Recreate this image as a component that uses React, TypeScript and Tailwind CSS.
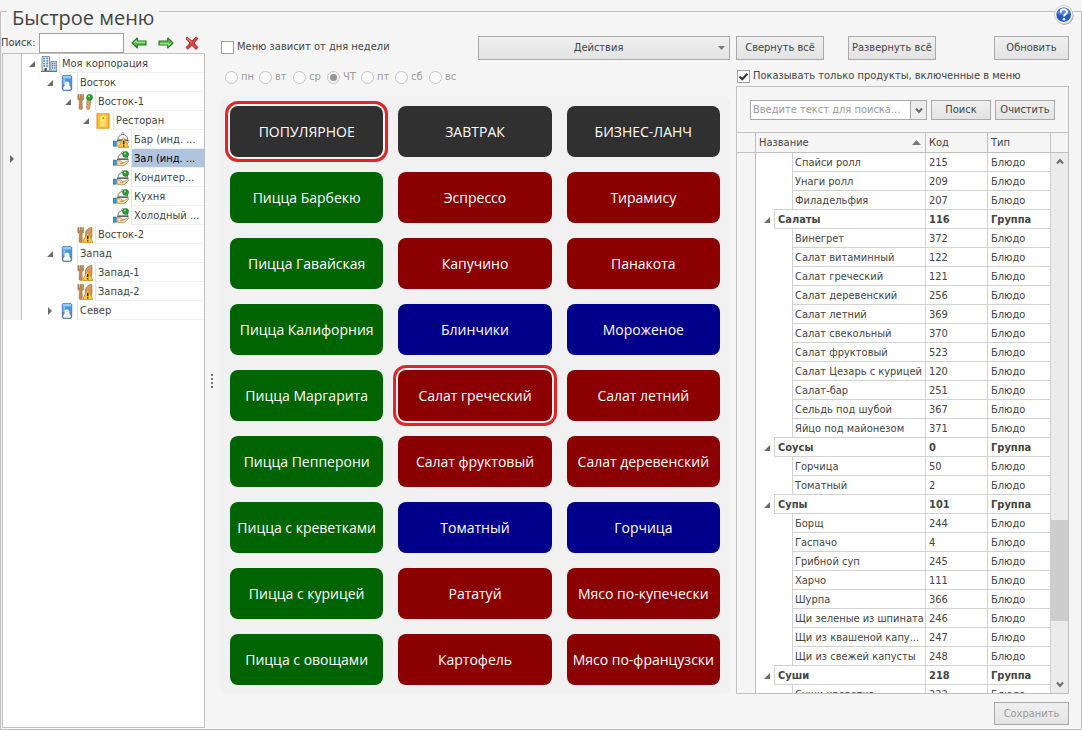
import { useState } from "react";
import type { ReactNode } from "react";

type TreeIconName = "corp" | "region" | "cutleryOk" | "cutleryWarn" | "restaurant" | "trayOk" | "trayWarn";

type TreeNode = {
  name: string;
  level: number;
  icon: TreeIconName;
  state?: "open" | "closed";
};

type Product = {
  name: string;
  code: number;
  group?: boolean;
};

type TileColor = "dark" | "green" | "red" | "blue";

const tree: TreeNode[] = [
  { name: "Моя корпорация", level: 0, icon: "corp", state: "open" },
  { name: "Восток", level: 1, icon: "region", state: "open" },
  { name: "Восток-1", level: 2, icon: "cutleryOk", state: "open" },
  { name: "Ресторан", level: 3, icon: "restaurant", state: "open" },
  { name: "Бар (инд. ...", level: 4, icon: "trayWarn" },
  { name: "Зал (инд. ...", level: 4, icon: "trayOk" },
  { name: "Кондитер...", level: 4, icon: "trayOk" },
  { name: "Кухня", level: 4, icon: "trayOk" },
  { name: "Холодный ...", level: 4, icon: "trayOk" },
  { name: "Восток-2", level: 2, icon: "cutleryWarn" },
  { name: "Запад", level: 1, icon: "region", state: "open" },
  { name: "Запад-1", level: 2, icon: "cutleryWarn" },
  { name: "Запад-2", level: 2, icon: "cutleryWarn" },
  { name: "Север", level: 1, icon: "region", state: "closed" }
];

const indents = ["pl-0", "pl-[18px]", "pl-9", "pl-[54px]", "pl-[72px]"];

const days = ["пн", "вт", "ср", "ЧТ", "пт", "сб", "вс"];

const tiles: [string, TileColor][] = [
  ["ПОПУЛЯРНОЕ", "dark"],
  ["ЗАВТРАК", "dark"],
  ["БИЗНЕС-ЛАНЧ", "dark"],
  ["Пицца Барбекю", "green"],
  ["Эспрессо", "red"],
  ["Тирамису", "red"],
  ["Пицца Гавайская", "green"],
  ["Капучино", "red"],
  ["Панакота", "red"],
  ["Пицца Калифорния", "green"],
  ["Блинчики", "blue"],
  ["Мороженое", "blue"],
  ["Пицца Маргарита", "green"],
  ["Салат греческий", "red"],
  ["Салат летний", "red"],
  ["Пицца Пепперони", "green"],
  ["Салат фруктовый", "red"],
  ["Салат деревенский", "red"],
  ["Пицца с креветками", "green"],
  ["Томатный", "blue"],
  ["Горчица", "blue"],
  ["Пицца с курицей", "green"],
  ["Рататуй", "red"],
  ["Мясо по-купечески", "red"],
  ["Пицца с овощами", "green"],
  ["Картофель", "red"],
  ["Мясо по-французски", "red"]
];

const tileColors: Record<TileColor, string> = {
  dark: "bg-[#303030]",
  green: "bg-[#006400]",
  red: "bg-[#8b0000]",
  blue: "bg-[#00008b]"
};

const products: Product[] = [
  { name: "Спайси ролл", code: 215 },
  { name: "Унаги ролл", code: 209 },
  { name: "Филадельфия", code: 207 },
  { name: "Салаты", code: 116, group: true },
  { name: "Винегрет", code: 372 },
  { name: "Салат витаминный", code: 122 },
  { name: "Салат греческий", code: 121 },
  { name: "Салат деревенский", code: 256 },
  { name: "Салат летний", code: 369 },
  { name: "Салат свекольный", code: 370 },
  { name: "Салат фруктовый", code: 523 },
  { name: "Салат Цезарь с курицей", code: 120 },
  { name: "Салат-бар", code: 251 },
  { name: "Сельдь под шубой", code: 367 },
  { name: "Яйцо под майонезом", code: 371 },
  { name: "Соусы", code: 0, group: true },
  { name: "Горчица", code: 50 },
  { name: "Томатный", code: 2 },
  { name: "Супы", code: 101, group: true },
  { name: "Борщ", code: 244 },
  { name: "Гаспачо", code: 4 },
  { name: "Грибной суп", code: 245 },
  { name: "Харчо", code: 111 },
  { name: "Шурпа", code: 366 },
  { name: "Щи зеленые из шпината", code: 246 },
  { name: "Щи из квашеной капу...", code: 247 },
  { name: "Щи из свежей капусты", code: 248 },
  { name: "Суши", code: 218, group: true },
  { name: "Суши креветка", code: 222 }
];

function Warning() {
  return (
    <g>
      <path d="M10.5 5.5 16 15.5H5.5Z" fill="#ffc83d" stroke="#d98a1c" strokeWidth=".8" strokeLinejoin="round" />
      <path d="M10.7 8.7v3.6M10.7 13.2v1.3" stroke="#222" strokeWidth="1.5" />
    </g>
  );
}

function OkDot() {
  return (
    <g>
      <circle cx="12.6" cy="3.4" r="3" fill="#2c9a35" stroke="#1d7527" strokeWidth=".6" />
      <circle cx="12" cy="2.5" r="1.1" fill="#8fe08a" />
    </g>
  );
}

function Fork() {
  return (
    <path
      d="M.8.5v4.3c0 1 .8 1.6 1.6 1.9L2 14.2c0 1.8 3.5 1.8 3.4 0L5 6.7c1-.3 1.6-.9 1.6-1.9V.5H5.5v3.6H4.6V.5H3v3.6H2V.5Z"
      fill="#c08a54"
      stroke="#9a6636"
      strokeWidth=".5"
    />
  );
}

function Tray() {
  return (
    <g>
      <circle cx="9.8" cy="1.6" r="1" fill="#eee" stroke="#666" strokeWidth=".7" />
      <path d="M4.8 7.8C5 4.4 7 2.5 9.8 2.5s4.8 1.9 5 5.3Z" fill="#eef0f2" stroke="#6d7277" strokeWidth=".9" />
      <path d="M4 8.4h11.6" stroke="#555" strokeWidth="1" />
      <path d="M0 9h3.6v5.3H0Z" fill="#2d9bd3" stroke="#1776a8" strokeWidth=".5" />
      <path
        d="M3.8 9.7h3.4l2.2 1.5h2.2l3-1.5c1-.4 1.5.4.8 1.1l-3.6 3.3c-1.8 1-4.7.9-8-.2Z"
        fill="#f5d9a0"
        stroke="#a07b45"
        strokeWidth=".7"
      />
      <path d="M7 12.4h3.5" stroke="#a07b45" strokeWidth=".7" />
    </g>
  );
}

const treeIcons: Record<TreeIconName, ReactNode> = {
  corp: (
    <g>
      <path d="M1 .5h7.5V15H1Z" fill="#e6eaed" stroke="#77797c" strokeWidth=".8" />
      <path d="M2.3 2.5h1.8M5.3 2.5h1.8M2.3 5h1.8M5.3 5h1.8M2.3 7.5h1.8M5.3 7.5h1.8M2.3 10h1.8M5.3 10h1.8" stroke="#2f8fc4" strokeWidth="1.5" />
      <path d="M3.5 12h2.4v3H3.5Z" fill="#555" />
      <path d="M9.8 5.5h5.7V15H9.8Z" fill="#d8dcdf" stroke="#77797c" strokeWidth=".8" />
      <path d="M11 7.5h1.3M13.2 7.5h1.3M11 9.7h1.3M13.2 9.7h1.3M11 12h1.3M13.2 12h1.3" stroke="#2f8fc4" strokeWidth="1.3" />
      <path d="M0 15.5h16" stroke="#6f7478" />
    </g>
  ),
  region: (
    <g>
      <path d="M3.2 1.5 4 .5h8l.8 1V14l-1 1.500H4.200l-1-1.500Z" fill="#4a93da" stroke="#235f9d" strokeWidth=".5" />
      <path d="M4 1h8v2.500H4Z" fill="#8fcdf8" />
      <path d="M4.300 3.500h2V9h-2Z" fill="#86c2f2" />
      <path d="M3.500 10.500h9V14l-1 1.200H4.500l-1-1.200Z" fill="#5b6c7c" />
      <path d="M4.200 14c0-2.400.6-3 1.600-3.400-.8-2.600.2-4.100 2.200-4.100s3 1.500 2.200 4.100c1 .4 1.600 1 1.600 3.400l-.6.800H4.800Z" fill="#f6f8fa" />
    </g>
  ),
  cutleryOk: (
    <g>
      <Fork />
      <path d="M10 4.500c2-1.600 4-.3 3.500 2.700l-.7 7c-.3 1.800-3 1.600-3.100 0Z" fill="#dba66b" stroke="#9a6636" strokeWidth=".6" />
      <OkDot />
    </g>
  ),
  cutleryWarn: (
    <g>
      <Fork />
      <path d="M8.500 5C10 1.800 13 .2 15 .7v8.600l-2 5H8.600Z" fill="#d09a62" stroke="#9a6636" strokeWidth=".6" />
      <Warning />
    </g>
  ),
  restaurant: (
    <g>
      <path d="M1.800.6h12.400v14.800H1.800Z" fill="#f6a51e" stroke="#e28c13" strokeWidth=".6" />
      <path d="M3 1.500h10v13H3Z" fill="#fbbd45" />
      <path d="M5.300 2.800h2V1.400h1.700v1.400h2v10.500H5.300Z" fill="#ffe96c" />
      <circle cx="8.200" cy="5.200" r="1.100" fill="#e28c13" />
      <path d="M6.500 9.200h3.500v1.600H6.500Z" fill="#fff" stroke="#e9a62a" strokeWidth=".5" />
    </g>
  ),
  trayOk: (
    <g>
      <Tray />
      <OkDot />
    </g>
  ),
  trayWarn: (
    <g>
      <Tray />
      <Warning />
    </g>
  )
};

function OpenMark() {
  return (
    <svg width="6" height="6" viewBox="0 0 6 6" aria-hidden="true">
      <path d="M6 0v6H0Z" fill="#6b6b6b" />
    </svg>
  );
}

function ClosedMark() {
  return (
    <svg width="4" height="8" viewBox="0 0 4 8" aria-hidden="true">
      <path d="M0 0v8l4-4Z" fill="#6b6b6b" />
    </svg>
  );
}

function Chevron({ up }: { up?: boolean }) {
  return (
    <svg width="8" height="7" viewBox="0 0 8 7" aria-hidden="true">
      <path d={up ? "M1 5.5 4 2l3 3.5" : "M1 1.5 4 5l3-3.5"} fill="none" stroke="#6b6b6b" strokeWidth="2" />
    </svg>
  );
}

function GreenArrow({ flip }: { flip?: boolean }) {
  return (
    <svg width="16" height="12" viewBox="0 0 16 12" className={flip ? "rotate-180" : ""} aria-hidden="true">
      <path d="M1 6 6.3 1v3H15v4H6.3v3Z" fill="#5fbf4d" stroke="#26772a" strokeWidth="1.1" strokeLinejoin="round" />
      <path d="M3 5.8 5.3 3.6V5.2H14" fill="none" stroke="#c1efae" strokeWidth=".9" />
    </svg>
  );
}

type ButtonProps = {
  children: ReactNode;
  className: string;
  disabled?: boolean;
};

function Button({ children, className, disabled }: ButtonProps) {
  return (
    <button
      type="button"
      disabled={disabled}
      className={`shrink-0 border border-[#a9a9a9] bg-linear-to-b from-[#f0f0f0] to-[#e3e3e3] text-center whitespace-nowrap disabled:text-[#9a9a9a] ${className}`}
    >
      {children}
    </button>
  );
}

type CheckboxProps = {
  label: string;
  checked: boolean;
  onChange: (checked: boolean) => void;
};

function Checkbox({ label, checked, onChange }: CheckboxProps) {
  return (
    <label className="flex items-center gap-[3px] whitespace-nowrap">
      <span className="relative flex">
        <input
          type="checkbox"
          className="size-[13px] appearance-none border border-[#a0a0a0] bg-white"
          checked={checked}
          onChange={(event) => onChange(event.target.checked)}
        />
        {checked && (
          <svg className="pointer-events-none absolute inset-0" width="13" height="13" viewBox="0 0 13 13" aria-hidden="true">
            <path d="M2.5 6.5 5.3 9.3 10.5 3.8" fill="none" stroke="#333" strokeWidth="2" />
          </svg>
        )}
      </span>
      {label}
    </label>
  );
}

function Sidebar() {
  const [selected, setSelected] = useState("Зал (инд. ...");

  return (
    <aside className="flex w-[204px] shrink-0 flex-col pb-px">
      <div className="flex h-5 items-center">
        <label htmlFor="tree-search" className="w-[38px] shrink-0">
          Поиск:
        </label>
        <input id="tree-search" className="h-5 w-[85px] border border-[#a0a0a0] bg-white px-1" />
        <div className="flex grow items-center justify-between pr-1.5 pl-[7px]">
          <button type="button" aria-label="Назад">
            <GreenArrow />
          </button>
          <button type="button" aria-label="Вперёд">
            <GreenArrow flip />
          </button>
          <button type="button" aria-label="Сбросить">
            <svg width="14" height="14" viewBox="0 0 14 14" aria-hidden="true">
              <path d="m2 1 5 4 4-4 2 1.500L9 7l4 4.500-2 2-4.200-4.200L3 13.300 1 11.500 5 7 1 3Z" fill="#d94444" stroke="#a91d1d" strokeWidth=".8" />
              <path d="m2.300 2.300 4.500 4" stroke="#f39a92" strokeWidth=".9" />
            </svg>
          </button>
        </div>
      </div>
      <div className="ml-px grow border border-[#c0c0c0] bg-white">
        <ul>
          {tree.map((node) => (
            <li key={node.name} className="flex h-[19px]">
              <span className="flex w-[19px] shrink-0 items-center justify-center border-r border-[#c0c0c0] bg-[#f5f5f5]">
                {selected === node.name && <ClosedMark />}
              </span>
              <button
                type="button"
                onClick={() => setSelected(node.name)}
                className={`flex min-w-0 grow items-stretch text-left ${indents[node.level]}`}
              >
                <span className="flex w-[19px] shrink-0 items-center justify-center pt-px pl-px">
                  {node.state === "open" && <OpenMark />}
                  {node.state === "closed" && <ClosedMark />}
                </span>
                <svg className="shrink-0 self-center" width="16" height="16" viewBox="0 0 16 16" aria-hidden="true">
                  {treeIcons[node.icon]}
                </svg>
                <span
                  className={`ml-0.5 grow overflow-hidden border-b border-l border-b-[#efefef] border-l-[#e3e3e3] pt-px pl-0.5 leading-[18px] whitespace-nowrap ${
                    selected === node.name ? "bg-[#b0c4de] text-black" : ""
                  }`}
                >
                  {node.name}
                </span>
              </button>
            </li>
          ))}
        </ul>
      </div>
    </aside>
  );
}

function MenuGrid() {
  const [byDay, setByDay] = useState(false);
  const [selected, setSelected] = useState(["ПОПУЛЯРНОЕ", "Салат греческий"]);

  const select = (name: string, index: number) => {
    setSelected(index < 3 ? [name, selected[1]] : [selected[0], name]);
  };

  return (
    <section className="flex min-w-0 grow flex-col">
      <div className="mt-[3px] flex items-start justify-between">
        <div className="pt-[3px] pl-px">
          <Checkbox label="Меню зависит от дня недели" checked={byDay} onChange={setByDay} />
        </div>
        <button
          type="button"
          aria-haspopup="menu"
          className="flex h-6 w-[252px] items-center border border-[#a9a9a9] bg-linear-to-b from-[#f0f0f0] to-[#e3e3e3] pr-1"
        >
          <span className="grow">Действия</span>
          <svg width="7" height="4" viewBox="0 0 7 4" aria-hidden="true">
            <path d="M0 0h7L3.500 4Z" fill="#7a7a7a" />
          </svg>
        </button>
      </div>
      <div className="mt-[9px] flex h-4 items-center pl-[5px] text-[#9a9a9a]">
        {days.map((day) => (
          <label key={day} className="flex w-[34px] items-center gap-[3px]">
            <input
              type="radio"
              name="day"
              disabled
              defaultChecked={day === "ЧТ"}
              className="size-[13px] shrink-0 appearance-none rounded-full border border-[#c4c4c4] bg-[#fafafa] p-[2px] checked:bg-[#959595] checked:bg-clip-content"
            />
            {day}
          </label>
        ))}
      </div>
      <div className="mt-[11px] grid grid-cols-3 gap-[15px] rounded-md bg-[#f1f1f1] px-2.5 pt-2.5 pb-[9px]">
        {tiles.map(([name, color], index) => (
          <button
            key={name}
            type="button"
            onClick={() => select(name, index)}
            className={`h-[51px] rounded-lg font-['Open_Sans',sans-serif] text-sm text-white ${tileColors[color]} ${
              selected.includes(name) ? "outline-3 outline-offset-2 outline-[#df2627]" : ""
            }`}
          >
            {name}
          </button>
        ))}
      </div>
    </section>
  );
}

function ProductTable() {
  return (
    <div className="flex h-0 grow overflow-hidden border-t border-[#c0c0c0]">
      <div className="min-w-0 grow bg-white">
        <table className="w-full table-fixed border-separate border-spacing-0 text-left">
          <thead>
            <tr className="h-5 bg-[#f5f5f5]">
              <th className="w-[19px] border-r border-b border-[#c0c0c0] p-0" aria-label="Маркер" />
              <th className="border-r border-b border-[#c0c0c0] p-0 font-normal">
                <div className="flex items-center justify-between pr-1 pl-[3px]">
                  Название
                  <svg width="9" height="5" viewBox="0 0 9 5" aria-hidden="true">
                    <path d="M4.500 0 9 5H0Z" fill="#7a7a7a" />
                  </svg>
                </div>
              </th>
              <th className="w-[62px] border-r border-b border-[#c0c0c0] p-0 pl-[3px] font-normal">Код</th>
              <th className="w-[63px] border-r border-b border-[#c0c0c0] p-0 pl-[3px] font-normal">Тип</th>
            </tr>
          </thead>
          <tbody>
            {products.map((product) => (
              <tr key={product.name} className={`h-[19px] ${product.group ? "font-bold" : ""}`}>
                <td className="border-r border-[#c0c0c0] bg-[#f5f5f5] p-0" />
                <td className="border-r border-[#d2d2d2] p-0">
                  <div className="flex h-[19px]">
                    <span className={`flex shrink-0 items-center justify-center pt-px pl-[3px] ${product.group ? "w-[18px]" : "w-9"}`}>
                      {product.group && <OpenMark />}
                    </span>
                    <span
                      className={`grow overflow-hidden border-b border-l border-[#d2d2d2] pt-px leading-[18px] whitespace-nowrap ${
                        product.group ? "-mt-px border-t pl-[3px]" : "pl-0.5"
                      }`}
                    >
                      {product.name}
                    </span>
                  </div>
                </td>
                <td className="border-r border-b border-[#d2d2d2] p-0 pt-px pl-[3px]">{product.code}</td>
                <td className="border-r border-b border-[#d2d2d2] p-0 pt-px pl-[3px]">{product.group ? "Группа" : "Блюдо"}</td>
              </tr>
            ))}
          </tbody>
        </table>
      </div>
      <div className="flex w-[17px] shrink-0 flex-col bg-[#ebebeb]">
        <div className="h-5 border-b border-[#c0c0c0] bg-[#f5f5f5]" />
        <div className="flex h-4 items-center justify-center">
          <Chevron up />
        </div>
        <div className="grow-[351]" />
        <div className="grow-[101] bg-[#cdcdcd]" />
        <div className="grow-[55]" />
        <div className="flex h-[17px] items-center justify-center">
          <Chevron />
        </div>
      </div>
    </div>
  );
}

function Products() {
  const [onlyIncluded, setOnlyIncluded] = useState(true);

  return (
    <section className="flex w-[333px] shrink-0 flex-col">
      <div className="mt-[3px] flex gap-6">
        <Button className="h-6 w-[88px]">Свернуть всё</Button>
        <Button className="h-6 w-[88px]">Развернуть всё</Button>
        <Button className="ml-auto h-6 w-[75px]">Обновить</Button>
      </div>
      <div className="mt-2 mb-0.5 flex h-4 items-center pl-px">
        <Checkbox label="Показывать только продукты, включенные в меню" checked={onlyIncluded} onChange={setOnlyIncluded} />
      </div>
      <div className="flex grow flex-col border border-[#c0c0c0]">
        <div className="flex gap-1 px-[13px] pt-[13px] pb-3">
          <div className="flex h-5 min-w-0 grow border border-[#a9a9a9] bg-white">
            <input
              aria-label="Введите текст для поиска"
              placeholder="Введите текст для поиска..."
              className="min-w-0 grow px-0.5 placeholder:text-[#9a9a9a]"
            />
            <button
              type="button"
              aria-label="История поиска"
              className="flex w-4 shrink-0 items-center justify-center border-l border-[#a9a9a9] bg-[#ededed]"
            >
              <Chevron />
            </button>
          </div>
          <Button className="h-5 w-[60px]">Поиск</Button>
          <Button className="h-5 w-[60px]">Очистить</Button>
        </div>
        <ProductTable />
      </div>
    </section>
  );
}

export default function App() {
  return (
    <div className="flex min-h-screen flex-col bg-[#f5f5f5] pt-[11px] font-['DejaVu_Sans_Condensed','Open_Sans',sans-serif] text-[11px] leading-4 text-[#444]">
      <main className="flex grow flex-col border border-[#c0c0c0]">
        <header className="flex h-[21px] items-start justify-between pr-[7px] pl-1.5">
          <h1 className="-mt-1.5 bg-[#f5f5f5] px-[5px] font-['Open_Sans',sans-serif] text-xl leading-6">Быстрое меню</h1>
          <button type="button" aria-label="Справка" className="-mt-[7px]">
            <svg width="20" height="20" viewBox="0 0 20 20" aria-hidden="true">
              <circle cx="10.500" cy="10.700" r="9" fill="#9a9a9a" />
              <circle cx="9.700" cy="9.700" r="9.200" fill="#f4f4f4" stroke="#c4c4c4" strokeWidth=".7" />
              <circle cx="9.700" cy="9.700" r="7.300" fill="#2857c5" />
              <path d="M3.300 8.500a6.500 6.500 0 0 1 12.800 0c-3 2-9.500 2-12.800 0Z" fill="#5484e0" />
              <path d="M6.700 7.500c0-4.300 6.300-4 6.200-.5 0 2.200-2.900 2-2.900 4.600" fill="none" stroke="#fff" strokeWidth="2" />
              <circle cx="10" cy="14.200" r="1.300" fill="#fff" />
            </svg>
          </button>
        </header>
        <div className="flex grow">
          <Sidebar />
          <div className="flex w-[15px] shrink-0 flex-col items-center justify-center gap-0.5 pr-0.5" role="separator">
            <span className="size-0.5 bg-[#777]" />
            <span className="size-0.5 bg-[#777]" />
            <span className="size-0.5 bg-[#777]" />
            <span className="size-0.5 bg-[#777]" />
          </div>
          <div className="flex min-w-0 grow flex-col pr-3">
            <div className="flex gap-1.5">
              <MenuGrid />
              <Products />
            </div>
            <div className="mt-2 flex justify-end">
              <Button disabled className="h-[23px] w-[75px]">
                Сохранить
              </Button>
            </div>
          </div>
        </div>
      </main>
    </div>
  );
}
